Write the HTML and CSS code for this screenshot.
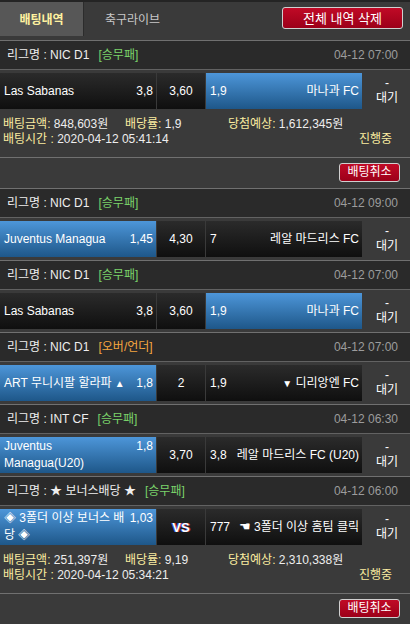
FILE: index.html
```html
<!DOCTYPE html>
<html lang="ko">
<head>
<meta charset="utf-8">
<title>배팅내역</title>
<link rel="stylesheet" href="styles.css">
</head>
<body>
<div class="header">
  <div class="tabs">
    <div class="tab active">배팅내역</div>
    <div class="tab">축구라이브</div>
  </div>
  <button class="btn btn-lg">전체 내역 삭제</button>
</div>

<div class="card">
  <div class="league"><span class="lname">리그명 : NIC D1</span><span class="type win">[승무패]</span><span class="date">04-12 07:00</span></div>
  <div class="match">
    <div class="cell home"><div class="in"><span class="team">Las Sabanas</span><span class="odd">3,8</span></div></div>
    <div class="cell draw">3,60</div>
    <div class="cell away sel"><div class="in"><span class="odd">1,9</span><span class="team">마나과 FC</span></div></div>
    <div class="status"><span>-</span><span>대기</span></div>
  </div>
</div>
<div class="info">
  <div class="irow">
    <span class="c1"><b>배팅금액:</b> 848,603원</span>
    <span class="c2"><b>배당률:</b> 1,9</span>
    <span class="c3"><b>당첨예상:</b> 1,612,345원</span>
  </div>
  <div class="irow">
    <span><b>배팅시간 :</b> 2020-04-12 05:41:14</span>
    <span class="prog">진행중</span>
  </div>
</div>
<div class="actions"><button class="btn">배팅취소</button></div>

<div class="card">
  <div class="league"><span class="lname">리그명 : NIC D1</span><span class="type win">[승무패]</span><span class="date">04-12 09:00</span></div>
  <div class="match">
    <div class="cell home sel"><div class="in"><span class="team">Juventus Managua</span><span class="odd">1,45</span></div></div>
    <div class="cell draw">4,30</div>
    <div class="cell away"><div class="in"><span class="odd">7</span><span class="team">레알 마드리스 FC</span></div></div>
    <div class="status"><span>-</span><span>대기</span></div>
  </div>
</div>

<div class="card">
  <div class="league"><span class="lname">리그명 : NIC D1</span><span class="type win">[승무패]</span><span class="date">04-12 07:00</span></div>
  <div class="match">
    <div class="cell home"><div class="in"><span class="team">Las Sabanas</span><span class="odd">3,8</span></div></div>
    <div class="cell draw">3,60</div>
    <div class="cell away sel"><div class="in"><span class="odd">1,9</span><span class="team">마나과 FC</span></div></div>
    <div class="status"><span>-</span><span>대기</span></div>
  </div>
</div>

<div class="card">
  <div class="league"><span class="lname">리그명 : NIC D1</span><span class="type ou">[오버/언더]</span><span class="date">04-12 07:00</span></div>
  <div class="match">
    <div class="cell home sel"><div class="in"><span class="team">ART 무니시팔 할라파 <span class="arr">▲</span></span><span class="odd">1,8</span></div></div>
    <div class="cell draw">2</div>
    <div class="cell away"><div class="in"><span class="odd">1,9</span><span class="team"><span class="arr">▼</span> 디리앙엔 FC</span></div></div>
    <div class="status"><span>-</span><span>대기</span></div>
  </div>
</div>

<div class="card">
  <div class="league"><span class="lname">리그명 : INT CF</span><span class="type win">[승무패]</span><span class="date">04-12 06:30</span></div>
  <div class="match">
    <div class="cell home sel"><div class="in"><span class="team">Juventus Managua(U20)</span><span class="odd">1,8</span></div></div>
    <div class="cell draw">3,70</div>
    <div class="cell away"><div class="in"><span class="odd">3,8</span><span class="team">레알 마드리스 FC (U20)</span></div></div>
    <div class="status"><span>-</span><span>대기</span></div>
  </div>
</div>

<div class="card">
  <div class="league"><span class="lname">리그명 : ★ 보너스배당 ★</span><span class="type win">[승무패]</span><span class="date">04-12 06:00</span></div>
  <div class="match">
    <div class="cell home sel"><div class="in"><span class="team">◈ 3폴더 이상 보너스 배당 ◈</span><span class="odd">1,03</span></div></div>
    <div class="cell draw vs">VS</div>
    <div class="cell away"><div class="in"><span class="odd">777</span><span class="team"><span class="hand">☚</span> 3폴더 이상 홈팀 클릭</span></div></div>
    <div class="status"><span>-</span><span>대기</span></div>
  </div>
</div>
<div class="info">
  <div class="irow">
    <span class="c1"><b>배팅금액:</b> 251,397원</span>
    <span class="c2"><b>배당률:</b> 9,19</span>
    <span class="c3"><b>당첨예상:</b> 2,310,338원</span>
  </div>
  <div class="irow">
    <span><b>배팅시간 :</b> 2020-04-12 05:34:21</span>
    <span class="prog">진행중</span>
  </div>
</div>
<div class="actions"><button class="btn">배팅취소</button></div>
</body>
</html>
```

FILE: styles.css
```css
* { box-sizing: border-box; }
body {
  margin: 0;
  width: 410px;
  background: #3a3a3a;
  color: #eeeeee;
  font-family: "Liberation Sans", "Noto Sans CJK KR", sans-serif;
  font-size: 12px;
  line-height: 15px;
}

.header {
  height: 40px;
  border-top: 2px solid #242424;
  display: flex;
  justify-content: space-between;
  align-items: flex-start;
}
.tabs { display: flex; height: 34px; }
.tab {
  height: 34px;
  display: flex;
  align-items: center;
  justify-content: center;
  font-size: 12px;
  color: #c8c8c8;
  padding: 2px 0 0;
}
.tab.active {
  width: 84px;
  background: #575757;
  border-right: 1px solid #2c2c2c;
  color: #fff1a0;
  font-weight: bold;
}
.tab + .tab { width: 97px; }

.btn {
  font-family: "Liberation Sans", "Noto Sans CJK KR", sans-serif;
  background: linear-gradient(#c00a26, #9c0019);
  color: #ffffff;
  border: 1px solid #d0d0d0;
  border-radius: 3px;
  font-size: 12px;
  line-height: 15px;
  width: 61px;
  height: 19px;
  padding: 0;
}
.btn-lg {
  width: 121px;
  height: 22px;
  margin: 5px 7px 0 0;
  font-size: 13px;
}

.card { border-top: 1px solid #707070; }
.league {
  height: 29px;
  background: #2a2a2a;
  border-bottom: 1px solid #626262;
  display: flex;
  align-items: center;
  padding: 0 12px 0 7px;
}
.type { margin-left: 9px; }
.type.win { color: #7ad36a; }
.type.ou { color: #f4a640; }
.date { margin-left: auto; color: #9c9c9c; }

.match {
  display: grid;
  grid-template-columns: 156px 48px 156px 48px;
  grid-template-rows: 36px;
  column-gap: 1px;
  height: 42px;
  padding: 3px 0 3px;
}
.cell {
  height: 36px;
  background: linear-gradient(#2b2b2b, #0f0f0f);
  display: flex;
  align-items: center;
  color: #ffffff;
  overflow: hidden;
}
.cell.sel { background: linear-gradient(#4d96d9, #1e5789); }
.cell .in {
  width: 100%;
  display: flex;
  align-items: baseline;
  justify-content: space-between;
  padding: 0 3px 0 4px;
  line-height: 17px;
}
.home .team { width: 126px; }
.away .team { text-align: right; }
.draw { justify-content: center; }
.vs {
  font-weight: bold;
  font-size: 13px;
  color: #ffffff;
  text-shadow: -1px 0 #3a5ad8, 1px 0 #d83a4a;
}
.arr { font-size: 10px; }
.hand { font-family: "DejaVu Sans", sans-serif; font-size: 13px; }
.status {
  display: flex;
  flex-direction: column;
  align-items: center;
  justify-content: center;
  line-height: 15px;
  color: #ffffff;
}

.info { height: 45px; padding: 5px 18px 0 3px; }
.irow { display: flex; justify-content: space-between; }
.irow b { font-weight: normal; color: #fbeca0; }
.irow .c1 { width: 122px; }
.irow .c2 { width: 103px; }
.irow .c3 { flex: 1; }
.irow .prog { color: #fbeca0; }

.actions {
  border-top: 1px solid #707070;
  height: 31px;
  display: flex;
  justify-content: flex-end;
  padding: 5px 10px 0 0;
}
```
